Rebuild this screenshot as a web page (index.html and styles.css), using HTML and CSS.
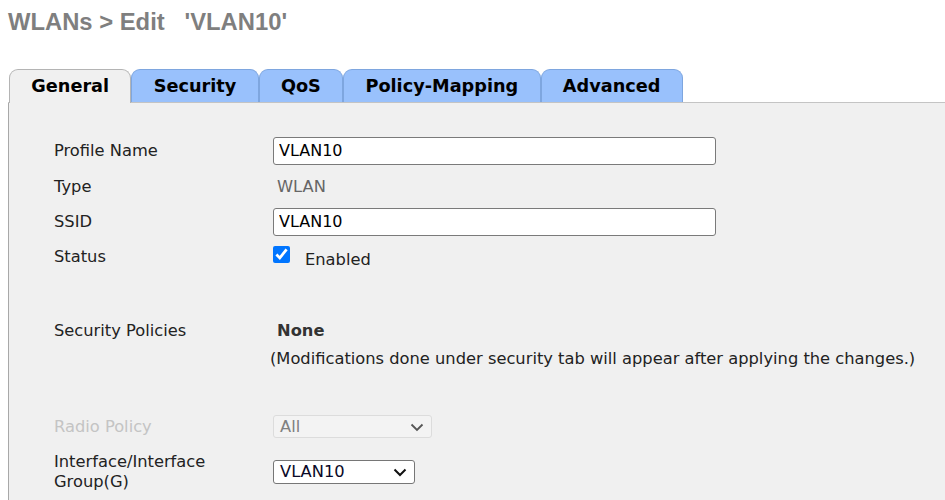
FILE: index.html
```html
<!DOCTYPE html>
<html>
<head>
<meta charset="utf-8">
<link rel="stylesheet" href="styles.css">
</head>
<body>
<h1 class="title">WLANs &gt; Edit &nbsp;&nbsp;'VLAN10'</h1>
<div class="tabs">
  <div class="tab active">General</div>
  <div class="tab">Security</div>
  <div class="tab">QoS</div>
  <div class="tab">Policy-Mapping</div>
  <div class="tab">Advanced</div>
</div>
<div class="panel">
  <div class="row r1">
    <div class="label">Profile Name</div>
    <div class="value"><input class="text" type="text" value="VLAN10"></div>
  </div>
  <div class="row">
    <div class="label">Type</div>
    <div class="value"><span class="static">WLAN</span></div>
  </div>
  <div class="row">
    <div class="label">SSID</div>
    <div class="value"><input class="text" type="text" value="VLAN10"></div>
  </div>
  <div class="row">
    <div class="label">Status</div>
    <div class="value"><input class="check" type="checkbox" checked><span class="enabled">Enabled</span></div>
  </div>
  <div class="row secpol">
    <div class="label">Security Policies</div>
    <div class="value"><span class="none">None</span></div>
  </div>
  <div class="note">(Modifications done under security tab will appear after applying the changes.)</div>
  <div class="row radio">
    <div class="label disabled">Radio Policy</div>
    <div class="value">
      <div class="sel sel-dis">
        <span>All</span>
        <svg class="chev" width="14" height="9" viewBox="0 0 14 9"><path d="M1.5 1.5 L7 7 L12.5 1.5" fill="none" stroke="#555" stroke-width="1.8"/></svg>
      </div>
    </div>
  </div>
  <div class="row iface">
    <div class="label">Interface/Interface Group(G)</div>
    <div class="value">
      <div class="sel sel-on">
        <span>VLAN10</span>
        <svg class="chev" width="14" height="9" viewBox="0 0 14 9"><path d="M1.5 1.5 L7 7 L12.5 1.5" fill="none" stroke="#111" stroke-width="2"/></svg>
      </div>
    </div>
  </div>
</div>
</body>
</html>
```
FILE: styles.css
```css
html, body {
  margin: 0;
  padding: 0;
  background: #ffffff;
  overflow: hidden;
}
body {
  padding: 0 0 0 8px;
  font-family: "DejaVu Sans", Verdana, sans-serif;
  font-size: 16.3px;
  color: #222;
  height: 500px;
  box-sizing: border-box;
}
.title {
  margin: 0;
  padding-top: 8px;
  height: 69px;
  font-family: "Liberation Sans", Arial, sans-serif;
  font-weight: bold;
  font-size: 23.8px;
  line-height: 28px;
  color: #7f7f7f;
  box-sizing: border-box;
}
.tabs {
  display: flex;
  align-items: flex-end;
  height: 34px;
  padding-left: 1px;
  border-bottom: 1px solid #c4c4c4;
  box-sizing: border-box;
}
.tab {
  height: 33px;
  box-sizing: border-box;
  padding: 0 21.3px;
  margin-right: 0;
  border: 1px solid #7ea6df;
  border-bottom: none;
  border-radius: 9px 9px 0 0;
  background: #99c1fc;
  font-weight: bold;
  font-size: 17.7px;
  line-height: 33px;
  color: #000;
  text-align: center;
  white-space: nowrap;
}
.tab.active {
  height: 34px;
  margin-bottom: -1px;
  background: #f0f0f0;
  border-color: #b4b4b4;
}
.panel {
  background: #f0f0f0;
  border-left: 1px solid #a8a8a8;
  padding: 30px 0 0 45px;
  height: 397px;
  box-sizing: border-box;
}
.row {
  display: grid;
  grid-template-columns: 219px 1fr;
  align-items: center;
  height: 35px;
}
.row:nth-child(2) {
  padding-top: 1px;
}
.label {
  line-height: 20px;
  color: #222;
}
.label.disabled {
  color: #c4c4c4;
}
.value {
  display: flex;
  align-items: center;
}
.text {
  width: 443px;
  height: 28px;
  box-sizing: border-box;
  border: 1px solid #7a7a7a;
  border-radius: 3px;
  background: #fff;
  padding: 0 5px;
  margin: 0;
  font-family: "DejaVu Sans", Verdana, sans-serif;
  font-size: 16px;
  color: #000;
  outline: none;
}
.static {
  padding-left: 4px;
  color: #666;
}
.check {
  width: 17px;
  height: 17px;
  margin: -5px 0 0 0;
  accent-color: #0075ff;
}
.enabled {
  margin-left: 15px;
  padding-top: 6px;
}
.secpol {
  margin-top: 39px;
}
.none {
  padding-left: 4px;
  font-weight: bold;
  color: #333;
}
.note {
  height: 20px;
  line-height: 20px;
  margin-top: 1px;
  margin-left: 216px;
  color: #222;
  white-space: nowrap;
}
.radio {
  margin-top: 40px;
}
.iface {
  margin-top: 5px;
  height: 45px;
}
.sel {
  position: relative;
  box-sizing: border-box;
  border-radius: 3px;
  display: flex;
  align-items: center;
  padding-left: 6px;
}
.sel-dis {
  width: 159px;
  height: 23px;
  border: 1px solid #dcdcdc;
  background: #f3f3f3;
  color: #808080;
}
.sel-on {
  width: 142px;
  height: 24px;
  border: 1px solid #767676;
  background: #fff;
  color: #0a0a28;
}
.chev {
  position: absolute;
  right: 7px;
  top: 7px;
}
```
